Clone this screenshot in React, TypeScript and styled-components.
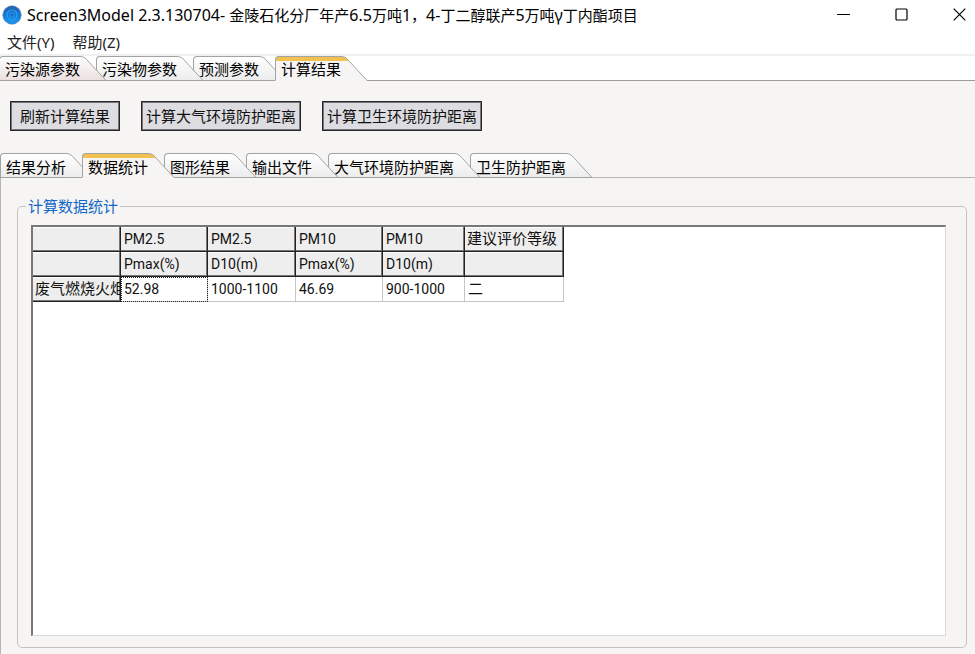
import React, { useState } from "react";
import styled, { createGlobalStyle, css } from "styled-components";

const GlobalStyle = createGlobalStyle`
  *, *::before, *::after { box-sizing: border-box; }
  body { margin: 0; background: #f7f5f4; }
  button { font: inherit; color: inherit; }
`;

const Window = styled.div`
  display: flex;
  flex-direction: column;
  min-height: 100vh;
  background: #f7f5f4;
  color: #111;
  font-family: "Noto Sans", "Noto Sans CJK SC", sans-serif;
  font-size: 15px;
  line-height: 20px;
  overflow: hidden;
`;

const TitleBar = styled.header`
  display: flex;
  align-items: center;
  height: 29px;
  padding-left: 2px;
  background: #fff;
`;

const Title = styled.h1`
  flex: 1;
  margin: 0 0 0 5px;
  font-size: 16px;
  font-weight: 400;
  color: #000;
  white-space: nowrap;
`;

const Hanzi = styled.span`
  font-size: 15px;
`;

const WindowButtons = styled.div`
  display: flex;
  margin-right: -13px;
`;

const WindowButton = styled.button`
  display: flex;
  align-items: center;
  justify-content: center;
  width: 58px;
  height: 29px;
  padding: 0;
  border: 0;
  background: transparent;
`;

const MenuBar = styled.nav`
  display: flex;
  align-items: flex-start;
  gap: 18px;
  height: 27px;
  padding: 3px 7px;
  background: #fff;
  border-bottom: 2px solid #f1f0f0;
`;

const MenuItem = styled.button`
  padding: 0;
  border: 0;
  background: transparent;
  color: #222;
`;

const TabList = styled.div<{ $main?: boolean }>`
  display: flex;
  isolation: isolate;
  height: 25px;
  line-height: ${(p) => (p.$main ? 18 : 20)}px;
  box-shadow: inset 0 -1px ${(p) => (p.$main ? "#9c9c9c" : "#b4b6b6")};
  ${(p) =>
    p.$main &&
    css`
      margin-left: -1px;
      background-color: #fff;
    `}
`;

const TabButton = styled.button<{ $level: number }>`
  position: relative;
  z-index: ${(p) => p.$level};
  display: flex;
  flex: none;
  height: 25px;
  margin-right: -10px;
  padding: 0;
  border: 0;
  background: transparent;
  color: #000;
  line-height: inherit;
`;

const activeFace = css`
  background: linear-gradient(#f2c150 0 4px, #f7f5f4 4px);
  border-bottom-color: #f7f5f4;
`;

const TabFace = styled.span<{ $active: boolean; $pink?: boolean }>`
  height: 25px;
  padding: 3px 0 0 5px;
  border: 1px solid #a2a4a4;
  border-right: 0;
  border-top-left-radius: 4px;
  background: linear-gradient(#ffffff, ${(p) => (p.$pink ? "#eadfde" : "#ececec")});
  ${(p) => p.$active && activeFace}
  white-space: nowrap;
`;

const Cap = styled.svg`
  display: block;
  flex: none;
  width: 26px;
  height: 25px;
`;

const Toolbar = styled.div`
  display: flex;
  flex-wrap: wrap;
  gap: 21px;
  padding: 20px 10px 22px;
`;

const ActionButton = styled.button<{ $wide?: boolean }>`
  height: 30px;
  padding: 0 ${(p) => (p.$wide ? 4 : 9)}px;
  border: 1px solid #262628;
  box-shadow: inset 0 0 0 1px #77777b;
  background: #dddde1;
  color: #111;
  line-height: 28px;
  white-space: nowrap;
`;

const Pane = styled.section`
  display: flex;
  flex: 1;
  padding: 18px 8px 6px 16px;
  border-left: 1px solid #b4b6b6;
`;

const Group = styled.fieldset`
  display: flex;
  flex: 1;
  min-width: 0;
  margin: 0;
  padding: 9px 20px 11px 13px;
  border: 1px solid #c3c3c2;
  border-radius: 5px;
`;

const Legend = styled.legend`
  margin-left: -5px;
  color: #1268c8;
`;

const GridFrame = styled.div`
  flex: 1;
  min-width: 0;
  overflow: hidden;
  background: #fff;
  border: 1px solid #d9d9d8;
  border-top: 2px solid #77777a;
  border-left: 2px solid #77777a;
`;

const Grid = styled.table`
  table-layout: fixed;
  width: 531px;
  border-collapse: separate;
  border-spacing: 0;
  font-family: Roboto, "Noto Sans CJK SC", sans-serif;
`;

const cell = css`
  height: 25px;
  padding: 0 0 1px 3px;
  overflow: hidden;
  white-space: nowrap;
  text-align: left;
  font-weight: 400;
  line-height: 20px;
`;

const HeadCell = styled.th<{ $cjk?: boolean }>`
  ${cell}
  padding-left: ${(p) => (p.$cjk ? 2 : 3)}px;
  font-size: ${(p) => (p.$cjk ? 15 : 14)}px;
  background: #efeeee;
  border-right: 1px solid #222;
  border-bottom: 1px solid #222;
  box-shadow: inset -1px -1px #777, inset 0 1px #fff;
`;

const DataCell = styled.td<{ $focused?: boolean; $cjk?: boolean }>`
  ${cell}
  font-size: ${(p) => (p.$cjk ? 15 : 14)}px;
  border-right: 1px solid #c4c4c4;
  border-bottom: 1px solid #c4c4c4;
  ${(p) => p.$focused && css`outline: 1px dotted #222; outline-offset: -1px;`}
`;

interface TabsProps {
  labels: string[];
  initial: number;
  name: string;
  main?: boolean;
}

function Tabs({ labels, initial, name, main }: TabsProps) {
  const [active, setActive] = useState(initial);
  return (
    <TabList role="tablist" aria-label={name} $main={main}>
      {labels.map((label, i) => {
        const on = i === active;
        const id = `${main ? "main" : "sub"}-cap-${i}`;
        const pink = main && i === 0;
        return (
          <TabButton
            key={label}
            role="tab"
            aria-selected={on}
            $level={on ? labels.length + 1 : labels.length - i}
            onClick={() => setActive(i)}
          >
            <TabFace $active={on} $pink={pink}>{label}</TabFace>
            <Cap viewBox="0 0 26 25" aria-hidden="true">
              <defs>
                <linearGradient id={id} x1="0" y1="0" x2="0" y2="25" gradientUnits="userSpaceOnUse">
                  {on ? (
                    <>
                      <stop offset="0.18" stopColor="#f2c150" />
                      <stop offset="0.2" stopColor="#f7f5f4" />
                    </>
                  ) : (
                    <>
                      <stop offset="0" stopColor="#ffffff" />
                      <stop offset="1" stopColor={pink ? "#eadfde" : "#ececec"} />
                    </>
                  )}
                </linearGradient>
              </defs>
              <path d="M0 .5C4 .5 6 2.5 8 5L26 24.5V25H0Z" fill={`url(#${id})`} />
              <path d="M0 .5C4 .5 6 2.5 8 5L26 24.5" fill="none" stroke="#a2a4a4" />
              {!on && <path d="M0 24.5H26" stroke="#a2a4a4" />}
            </Cap>
          </TabButton>
        );
      })}
    </TabList>
  );
}

const AppIcon = () => (
  <svg width="20" height="20" viewBox="0 0 20 20" aria-hidden="true">
    <defs>
      <linearGradient id="app-disc" x1="0" y1="0" x2="0" y2="1">
        <stop offset="0" stopColor="#2c62ac" />
        <stop offset="0.5" stopColor="#1278d8" />
        <stop offset="1" stopColor="#1c9af0" />
      </linearGradient>
    </defs>
    <circle cx="10" cy="10" r="9.2" fill="url(#app-disc)" stroke="#4a80b8" strokeWidth="0.6" />
    <circle cx="10" cy="10" r="5" fill="none" stroke="#27a0f0" strokeWidth="1.2" />
    <circle cx="10" cy="10" r="2.2" fill="#1668cb" stroke="#2fa6f2" strokeWidth="1" />
  </svg>
);

const names = ["", "PM2.5", "PM2.5", "PM10", "PM10", "建议评价等级"];
const units = ["", "Pmax(%)", "D10(m)", "Pmax(%)", "D10(m)", ""];
const values = ["52.98", "1000-1100", "46.69", "900-1000", "二"];
const columnWidths = [88, 87, 88, 87, 82, 99];

export default function App() {
  return (
    <>
      <GlobalStyle />
      <Window>
        <TitleBar>
          <AppIcon />
          <Title>
            Screen3Model 2.3.130704- <Hanzi>金陵石化分厂年产</Hanzi>6.5<Hanzi>万吨</Hanzi>1<Hanzi>，</Hanzi>4-
            <Hanzi>丁二醇联产</Hanzi>5<Hanzi>万吨</Hanzi>γ<Hanzi>丁内酯项目</Hanzi>
          </Title>
          <WindowButtons>
            <WindowButton aria-label="最小化">
              <svg width="13" height="13" viewBox="0 0 13 13"><path d="M0 6.5H13" stroke="#000" /></svg>
            </WindowButton>
            <WindowButton aria-label="最大化">
              <svg width="13" height="13" viewBox="0 0 13 13">
                <rect x="1" y="1" width="11" height="11" rx="1" fill="none" stroke="#000" strokeWidth="1.2" />
              </svg>
            </WindowButton>
            <WindowButton aria-label="关闭">
              <svg width="13" height="13" viewBox="0 0 13 13">
                <path d="M.7.7 12.3 12.3M12.3.7.7 12.3" stroke="#000" strokeWidth="1.2" />
              </svg>
            </WindowButton>
          </WindowButtons>
        </TitleBar>
        <MenuBar aria-label="菜单">
          <MenuItem>文件(Y)</MenuItem>
          <MenuItem>帮助(Z)</MenuItem>
        </MenuBar>
        <Tabs main name="主选项卡" initial={3} labels={["污染源参数", "污染物参数", "预测参数", "计算结果"]} />
        <Toolbar>
          <ActionButton>刷新计算结果</ActionButton>
          <ActionButton $wide>计算大气环境防护距离</ActionButton>
          <ActionButton $wide>计算卫生环境防护距离</ActionButton>
        </Toolbar>
        <Tabs
          name="结果选项卡"
          initial={1}
          labels={["结果分析", "数据统计", "图形结果", "输出文件", "大气环境防护距离", "卫生防护距离"]}
        />
        <Pane>
          <Group>
            <Legend>计算数据统计</Legend>
            <GridFrame>
              <Grid>
                <colgroup>
                  {columnWidths.map((w, i) => <col key={i} width={w} />)}
                </colgroup>
                <thead>
                  <tr>{names.map((n, i) => <HeadCell key={i} scope="col" $cjk={i === 5}>{n}</HeadCell>)}</tr>
                  <tr>{units.map((u, i) => <HeadCell key={i} scope="col">{u}</HeadCell>)}</tr>
                </thead>
                <tbody>
                  <tr>
                    <HeadCell scope="row" $cjk>废气燃烧火炬</HeadCell>
                    {values.map((v, i) => (
                      <DataCell key={i} $focused={i === 0} $cjk={i === 4}>{v}</DataCell>
                    ))}
                  </tr>
                </tbody>
              </Grid>
            </GridFrame>
          </Group>
        </Pane>
      </Window>
    </>
  );
}
